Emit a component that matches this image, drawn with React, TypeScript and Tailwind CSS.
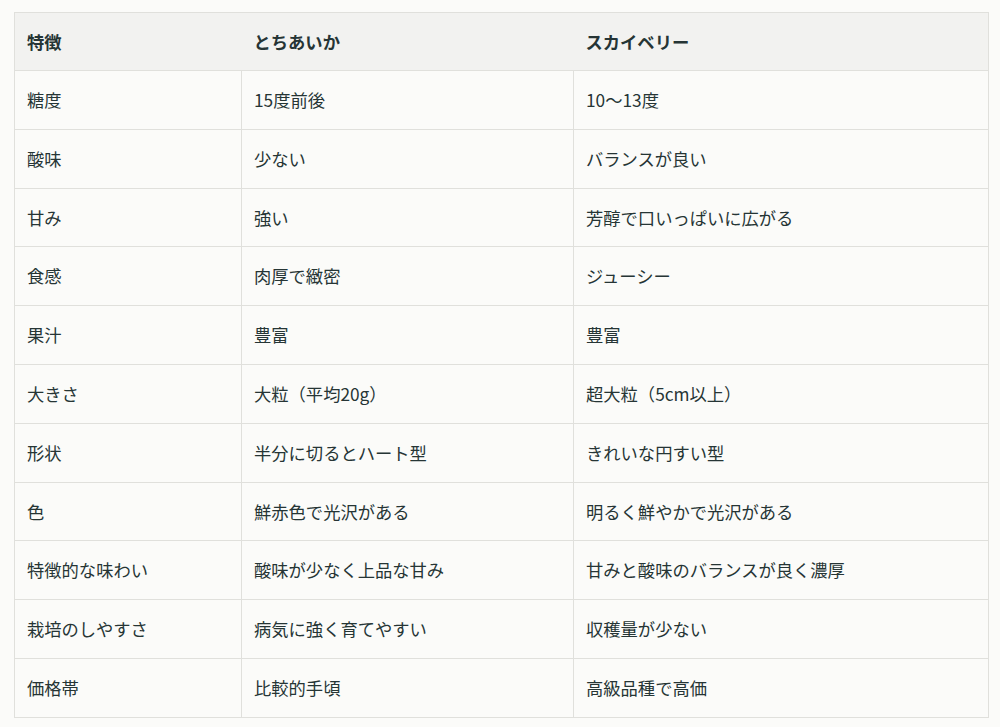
const rows: [string, string, string][] = [
  ["糖度", "15度前後", "10〜13度"],
  ["酸味", "少ない", "バランスが良い"],
  ["甘み", "強い", "芳醇で口いっぱいに広がる"],
  ["食感", "肉厚で緻密", "ジューシー"],
  ["果汁", "豊富", "豊富"],
  ["大きさ", "大粒（平均20g）", "超大粒（5cm以上）"],
  ["形状", "半分に切るとハート型", "きれいな円すい型"],
  ["色", "鮮赤色で光沢がある", "明るく鮮やかで光沢がある"],
  ["特徴的な味わい", "酸味が少なく上品な甘み", "甘みと酸味のバランスが良く濃厚"],
  ["栽培のしやすさ", "病気に強く育てやすい", "収穫量が少ない"],
  ["価格帯", "比較的手頃", "高級品種で高価"],
];

export default function App() {
  return (
    <div
      className="min-h-[727px] w-[1000px] bg-[#fbfbf9] pl-[14px] pt-[12px] text-[#263535]"
      style={{ fontFamily: '"Noto Sans CJK JP", "Noto Sans", sans-serif' }}
    >
      <table className="w-[975px] table-fixed border-collapse border border-[#e0e0dc] text-[17.3px]">
        <colgroup>
          <col className="w-[227px]" />
          <col className="w-[332px]" />
          <col />
        </colgroup>
        <thead>
          <tr className="h-[58px] bg-[#f2f2f0]">
            <th className="px-3 text-left font-bold">特徴</th>
            <th className="px-3 text-left font-bold">とちあいか</th>
            <th className="px-3 text-left font-bold">スカイベリー</th>
          </tr>
        </thead>
        <tbody>
          {rows.map((r, i) => (
            <tr key={i} className="h-[58.8px] border-t border-[#e0e0dc]">
              <td className="px-3 font-normal">{r[0]}</td>
              <td className="border-l border-[#e0e0dc] px-3">{r[1]}</td>
              <td className="border-l border-[#e0e0dc] px-3">{r[2]}</td>
            </tr>
          ))}
        </tbody>
      </table>
    </div>
  );
}
